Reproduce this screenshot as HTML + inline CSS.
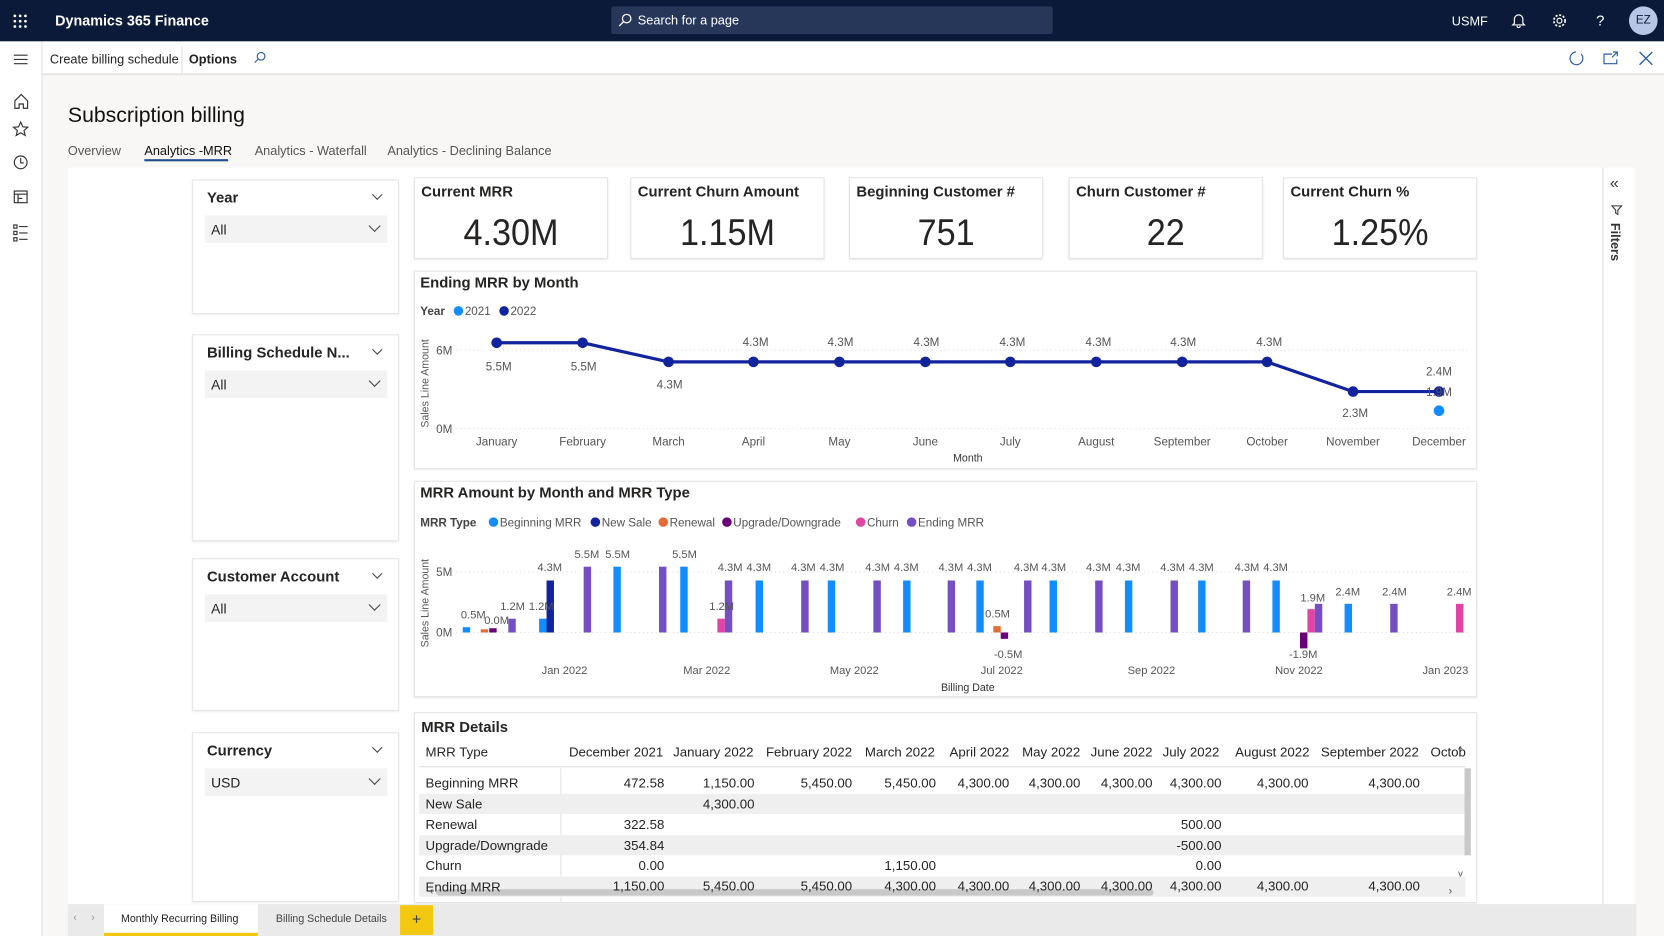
<!DOCTYPE html>
<html><head><meta charset="utf-8"><style>
*{box-sizing:border-box;margin:0;padding:0}
html,body{width:1664px;height:936px;overflow:hidden;background:#f8f7f5;font-family:"Liberation Sans",sans-serif;color:#222}
#s{position:absolute;left:0;top:0;width:1568px;height:882px;transform:scale(1.06122);transform-origin:0 0;background:#f8f7f5}
.a{position:absolute;white-space:nowrap}
.card{position:absolute;background:#fff;border:1px solid #e4e4e4;box-shadow:0 1px 2px rgba(0,0,0,.12)}
.kt{position:absolute;left:6px;top:4px;font-weight:bold;font-size:14px;color:#252423}
.kv{position:absolute;left:0;right:0;top:32px;text-align:center;font-size:35px;color:#252423;transform:scaleX(.92)}
.sl{position:absolute;left:181px;width:195px;background:#fff;border:1px solid #e6e6e6;box-shadow:0 1px 2px rgba(0,0,0,.1)}
.sl .t{position:absolute;left:13px;top:8px;font-weight:bold;font-size:14px;color:#252423}
.sl .dd{position:absolute;left:11px;top:33px;width:172px;height:26px;background:#f3f3f3}
.sl .dd span{position:absolute;left:6px;top:6px;font-size:13px}
.chev{position:absolute;width:8px;height:8px;border-right:1.3px solid #444;border-bottom:1.3px solid #444;transform:rotate(45deg)}
.tbl td{font-size:12.5px;color:#252423}
</style></head><body><div id="s">
<!-- top bar -->
<div class="a" style="left:0;top:0;width:1568px;height:39px;background:#0b1a38"></div>
<svg class="a" style="left:12px;top:13px" width="14" height="14"><g fill="#fff"><circle cx="2" cy="2" r="1.3"/><circle cx="7" cy="2" r="1.3"/><circle cx="12" cy="2" r="1.3"/><circle cx="2" cy="7" r="1.3"/><circle cx="7" cy="7" r="1.3"/><circle cx="12" cy="7" r="1.3"/><circle cx="2" cy="12" r="1.3"/><circle cx="7" cy="12" r="1.3"/><circle cx="12" cy="12" r="1.3"/></g></svg>
<div class="a" style="left:52px;top:12px;color:#fff;font-size:13.5px;font-weight:bold">Dynamics 365 Finance</div>
<div class="a" style="left:576px;top:6px;width:416px;height:26px;background:#26375a;border-radius:2px"></div>
<svg class="a" style="left:582px;top:12px" width="14" height="14"><circle cx="8.5" cy="5.5" r="4" fill="none" stroke="#fff" stroke-width="1.2"/><path d="M5.5 8.5 1.5 12.5" stroke="#fff" stroke-width="1.2"/></svg>
<div class="a" style="left:601px;top:12px;color:#fff;font-size:12px">Search for a page</div>
<div class="a" style="left:1368px;top:13px;color:#fff;font-size:12px">USMF</div>
<svg class="a" style="left:1424px;top:12px" width="14" height="15"><path d="M3 10V6a4 4 0 0 1 8 0v4l1.5 1.5h-11zM5.5 12.5a1.5 1.5 0 0 0 3 0" fill="none" stroke="#fff" stroke-width="1.1"/></svg>
<svg class="a" style="left:1462px;top:12px" width="15" height="15"><circle cx="7.5" cy="7.5" r="2.3" fill="none" stroke="#fff" stroke-width="1.1"/><circle cx="7.5" cy="7.5" r="5.3" fill="none" stroke="#fff" stroke-width="1.6" stroke-dasharray="2 1.5"/></svg>
<div class="a" style="left:1504px;top:11px;color:#fff;font-size:14px">?</div>
<div class="a" style="left:1535px;top:6px;width:27px;height:27px;border-radius:50%;background:#b7c6e6;color:#0b1a38;font-size:11px;text-align:center;line-height:27px">EZ</div>
<!-- left rail -->
<div class="a" style="left:0;top:39px;width:40px;height:843px;background:#fff;border-right:1px solid #e1e1e1"></div>
<svg class="a" style="left:11px;top:48px" width="18" height="190" fill="none" stroke="#333" stroke-width="1.1">
<path d="M2 4h13M2 8h13M2 12h13"/>
<path d="M3 47l6-6 6 6v7h-4v-4H7v4H3z"/>
<path d="M8.5 67l2 4.5 4.7.4-3.6 3.1 1.1 4.6-4.2-2.5-4.2 2.5 1.1-4.6-3.6-3.1 4.7-.4z"/>
<circle cx="8.5" cy="105" r="6"/><path d="M8.5 101v4.5h3"/>
<rect x="2.5" y="132" width="12" height="11"/><path d="M2.5 135h12M6 135v8M6 139h4"/>
<path d="M2 164h3v3H2zM2 170h3v3H2zM2 176h3v3H2zM7 165.5h8M7 171.5h8M7 177.5h8"/>
</svg>
<!-- action bar -->
<div class="a" style="left:40px;top:39px;width:1528px;height:32px;background:#fff;border-bottom:2px solid #e6e6e6"></div>
<div class="a" style="left:47px;top:49px;font-size:12px">Create billing schedule</div>
<div class="a" style="left:171px;top:43px;width:1px;height:26px;background:#ddd"></div>
<div class="a" style="left:178px;top:49px;font-size:12px;font-weight:bold">Options</div>
<svg class="a" style="left:238px;top:48px" width="13" height="13"><circle cx="8" cy="5" r="3.6" fill="none" stroke="#2a5da8" stroke-width="1.1"/><path d="M5.4 7.6 2 11" stroke="#2a5da8" stroke-width="1.1"/></svg>
<svg class="a" style="left:1478px;top:47px" width="16" height="16"><path d="M12 4A6 6 0 1 1 7 2" fill="none" stroke="#2a5da8" stroke-width="1.1"/></svg>
<svg class="a" style="left:1510px;top:48px" width="16" height="14"><path d="M9 3H1.5v9h12V8M10 1h4v4M14 1l-5 5" fill="none" stroke="#2a5da8" stroke-width="1.1"/></svg>
<svg class="a" style="left:1544px;top:48px" width="14" height="14"><path d="M1 1l12 12M13 1 1 13" stroke="#2a5da8" stroke-width="1.3"/></svg>
<!-- title & tabs -->
<div class="a" style="left:64px;top:98px;font-size:20px;color:#111">Subscription billing</div>
<div class="a" style="left:64px;top:135px;font-size:12px;color:#555">Overview</div>
<div class="a" style="left:136px;top:135px;font-size:12px;color:#111">Analytics -MRR</div>
<div class="a" style="left:136px;top:150px;width:79px;height:2px;background:#1f4e8c"></div>
<div class="a" style="left:240px;top:135px;font-size:12px;color:#555">Analytics - Waterfall</div>
<div class="a" style="left:365px;top:135px;font-size:12px;color:#555">Analytics - Declining Balance</div>
<!-- report canvas -->
<div class="a" style="left:64px;top:158px;width:1446px;height:694px;background:#fff"></div>
<div class="a" style="left:1510px;top:158px;width:30px;height:694px;background:#fff;border-left:1px solid #ddd"></div>
<div class="a" style="left:1517px;top:164px;font-size:15px;color:#333">«</div>
<svg class="a" style="left:1518px;top:193px" width="11" height="10"><path d="M1 1h9L6.5 5v4L4.5 8V5z" fill="none" stroke="#333"/></svg>
<div class="a" style="left:1515px;top:210px;font-size:12px;font-weight:bold;color:#333;writing-mode:vertical-rl">Filters</div>
<!-- slicers -->
<div class="sl" style="top:169px;height:127px"><div class="t">Year</div><div class="chev" style="right:16px;top:10px;width:7px;height:7px"></div><div class="dd"><span>All</span><div class="chev" style="right:8px;top:6px"></div></div></div>
<div class="sl" style="top:315px;height:195px"><div class="t">Billing Schedule N...</div><div class="chev" style="right:16px;top:10px;width:7px;height:7px"></div><div class="dd"><span>All</span><div class="chev" style="right:8px;top:6px"></div></div></div>
<div class="sl" style="top:526px;height:144px"><div class="t">Customer Account</div><div class="chev" style="right:16px;top:10px;width:7px;height:7px"></div><div class="dd"><span>All</span><div class="chev" style="right:8px;top:6px"></div></div></div>
<div class="sl" style="top:690px;height:160px"><div class="t">Currency</div><div class="chev" style="right:16px;top:10px;width:7px;height:7px"></div><div class="dd"><span>USD</span><div class="chev" style="right:8px;top:6px"></div></div></div>
<!-- KPIs -->
<div class="card" style="left:390px;top:167px;width:183px;height:77px"><div class="kt">Current MRR</div><div class="kv">4.30M</div></div>
<div class="card" style="left:594px;top:167px;width:183px;height:77px"><div class="kt">Current Churn Amount</div><div class="kv">1.15M</div></div>
<div class="card" style="left:800px;top:167px;width:183px;height:77px"><div class="kt">Beginning Customer #</div><div class="kv">751</div></div>
<div class="card" style="left:1007px;top:167px;width:183px;height:77px"><div class="kt">Churn Customer #</div><div class="kv">22</div></div>
<div class="card" style="left:1209px;top:167px;width:183px;height:77px"><div class="kt">Current Churn %</div><div class="kv">1.25%</div></div>
<!-- line chart -->
<div class="card" style="left:390px;top:255px;width:1002px;height:187px"></div>
<svg class="a" style="left:390px;top:255px" width="1002" height="187" font-family="Liberation Sans" font-size="11" fill="#555">
<text x="6" y="16" font-size="14" font-weight="bold" fill="#252423">Ending MRR by Month</text>
<text x="6" y="42" font-weight="bold" fill="#444">Year</text>
<circle cx="42" cy="38" r="4.5" fill="#118dff"/><text x="48" y="42">2021</text>
<circle cx="85" cy="38" r="4.5" fill="#12239e"/><text x="91" y="42">2022</text>
<text transform="translate(14,148) rotate(-90)" font-size="10">Sales Line Amount</text>
<text x="21" y="79">6M</text><text x="21" y="153">0M</text>
<path d="M40 75H995M40 149H995" stroke="#ddd" stroke-dasharray="1 3"/>
<polyline points="78,68 159,68 240,86 320,86 401,86 482,86 562,86 643,86 724,86 804,86 885,114 966,114" fill="none" stroke="#12239e" stroke-width="3"/>
<g fill="#12239e"><circle cx="78" cy="68" r="5"/><circle cx="159" cy="68" r="5"/><circle cx="240" cy="86" r="5"/><circle cx="320" cy="86" r="5"/><circle cx="401" cy="86" r="5"/><circle cx="482" cy="86" r="5"/><circle cx="562" cy="86" r="5"/><circle cx="643" cy="86" r="5"/><circle cx="724" cy="86" r="5"/><circle cx="804" cy="86" r="5"/><circle cx="885" cy="114" r="5"/><circle cx="966" cy="114" r="5"/></g>
<circle cx="966" cy="132" r="5" fill="#118dff"/>
<g text-anchor="middle"><text x="80" y="94">5.5M</text><text x="160" y="94">5.5M</text><text x="241" y="111">4.3M</text>
<text x="322" y="71">4.3M</text><text x="402" y="71">4.3M</text><text x="483" y="71">4.3M</text><text x="564" y="71">4.3M</text><text x="645" y="71">4.3M</text><text x="725" y="71">4.3M</text><text x="806" y="71">4.3M</text>
<text x="887" y="138">2.3M</text><text x="966" y="99">2.4M</text><text x="966" y="118">1.9M</text>
<text x="78" y="165">January</text><text x="159" y="165">February</text><text x="240" y="165">March</text><text x="320" y="165">April</text><text x="401" y="165">May</text><text x="482" y="165">June</text><text x="562" y="165">July</text><text x="643" y="165">August</text><text x="724" y="165">September</text><text x="804" y="165">October</text><text x="885" y="165">November</text><text x="966" y="165">December</text>
<text x="522" y="180" font-size="10" fill="#333">Month</text></g>
</svg>
<!-- bar chart -->
<div class="card" style="left:390px;top:453px;width:1002px;height:204px"></div>
<svg class="a" style="left:390px;top:453px" width="1002" height="204" font-family="Liberation Sans" font-size="11" fill="#555">
<text x="6" y="16" font-size="14" font-weight="bold" fill="#252423">MRR Amount by Month and MRR Type</text>
<text x="6" y="43" font-weight="bold" fill="#444">MRR Type</text>
<circle cx="75" cy="39" r="4.5" fill="#118dff"/><text x="81" y="43">Beginning MRR</text>
<circle cx="171" cy="39" r="4.5" fill="#12239e"/><text x="177" y="43">New Sale</text>
<circle cx="235" cy="39" r="4.5" fill="#e66c37"/><text x="241" y="43">Renewal</text>
<circle cx="295" cy="39" r="4.5" fill="#6b007b"/><text x="301" y="43">Upgrade/Downgrade</text>
<circle cx="421" cy="39" r="4.5" fill="#e044a7"/><text x="427" y="43">Churn</text>
<circle cx="469" cy="39" r="4.5" fill="#744ec2"/><text x="475" y="43">Ending MRR</text>
<text transform="translate(14,157) rotate(-90)" font-size="10">Sales Line Amount</text>
<text x="21" y="90">5M</text><text x="21" y="147">0M</text>
<path d="M40 86H995M40 143H995" stroke="#ddd" stroke-dasharray="1 3"/>
<g>
<rect x="46" y="138" width="7" height="5" fill="#118dff"/>
<rect x="63" y="140" width="7" height="3" fill="#e66c37"/><rect x="71" y="139" width="7" height="4" fill="#6b007b"/>
<rect x="89" y="130" width="7" height="13" fill="#744ec2"/>
<rect x="118" y="130" width="7" height="13" fill="#118dff"/><rect x="125" y="94" width="7" height="49" fill="#12239e"/>
<rect x="160" y="81" width="7" height="62" fill="#744ec2"/><rect x="188" y="81" width="7" height="62" fill="#118dff"/>
<rect x="231" y="81" width="7" height="62" fill="#744ec2"/><rect x="251" y="81" width="7" height="62" fill="#118dff"/>
<rect x="286" y="130" width="7" height="13" fill="#e044a7"/><rect x="293" y="94" width="7" height="49" fill="#744ec2"/>
<rect x="322" y="94" width="7" height="49" fill="#118dff"/>
<rect x="365" y="94" width="7" height="49" fill="#744ec2"/><rect x="390" y="94" width="7" height="49" fill="#118dff"/>
<rect x="433" y="94" width="7" height="49" fill="#744ec2"/><rect x="461" y="94" width="7" height="49" fill="#118dff"/>
<rect x="503" y="94" width="7" height="49" fill="#744ec2"/><rect x="530" y="94" width="7" height="49" fill="#118dff"/>
<rect x="546" y="137" width="7" height="6" fill="#e66c37"/><rect x="553" y="143" width="7" height="6" fill="#6b007b"/>
<rect x="575" y="94" width="7" height="49" fill="#744ec2"/><rect x="599" y="94" width="7" height="49" fill="#118dff"/>
<rect x="642" y="94" width="7" height="49" fill="#744ec2"/><rect x="670" y="94" width="7" height="49" fill="#118dff"/>
<rect x="713" y="94" width="7" height="49" fill="#744ec2"/><rect x="739" y="94" width="7" height="49" fill="#118dff"/>
<rect x="781" y="94" width="7" height="49" fill="#744ec2"/><rect x="809" y="94" width="7" height="49" fill="#118dff"/>
<rect x="835" y="143" width="7" height="15" fill="#6b007b"/><rect x="842" y="121" width="7" height="22" fill="#e044a7"/><rect x="849" y="116" width="7" height="27" fill="#744ec2"/>
<rect x="877" y="116" width="7" height="27" fill="#118dff"/>
<rect x="920" y="116" width="7" height="27" fill="#744ec2"/>
<rect x="982" y="116" width="7" height="27" fill="#e044a7"/>
</g>
<g text-anchor="middle" font-size="10.5">
<text x="56" y="130">0.5M</text><text x="78" y="135">0.0M</text><text x="93" y="122">1.2M</text><text x="120" y="122">1.2M</text><text x="128" y="85">4.3M</text>
<text x="163" y="73">5.5M</text><text x="192" y="73">5.5M</text><text x="255" y="73">5.5M</text>
<text x="290" y="122">1.2M</text><text x="298" y="85">4.3M</text><text x="325" y="85">4.3M</text>
<text x="367" y="85">4.3M</text><text x="394" y="85">4.3M</text><text x="437" y="85">4.3M</text><text x="464" y="85">4.3M</text>
<text x="506" y="85">4.3M</text><text x="533" y="85">4.3M</text><text x="550" y="129">0.5M</text><text x="560" y="167">-0.5M</text>
<text x="577" y="85">4.3M</text><text x="603" y="85">4.3M</text><text x="645" y="85">4.3M</text><text x="673" y="85">4.3M</text>
<text x="715" y="85">4.3M</text><text x="742" y="85">4.3M</text><text x="785" y="85">4.3M</text><text x="812" y="85">4.3M</text>
<text x="847" y="114">1.9M</text><text x="838" y="167">-1.9M</text><text x="880" y="108">2.4M</text><text x="924" y="108">2.4M</text><text x="985" y="108">2.4M</text>
<text x="142" y="182">Jan 2022</text><text x="276" y="182">Mar 2022</text><text x="415" y="182">May 2022</text><text x="554" y="182">Jul 2022</text><text x="695" y="182">Sep 2022</text><text x="834" y="182">Nov 2022</text><text x="972" y="182">Jan 2023</text>
<text x="522" y="198" font-size="10" fill="#333">Billing Date</text></g>
</svg>
<!-- table -->
<div class="card" style="left:390px;top:671px;width:1002px;height:180px;overflow:hidden">
<div class="a" style="left:6px;top:5px;font-size:14px;font-weight:bold;color:#252423">MRR Details</div>
<div class="a" style="left:4px;top:50px;width:986px;height:1px;background:#ddd"></div>
<div class="a" style="left:137px;top:52px;width:1px;height:130px;background:#e3e3e3"></div>
<div class="a" style="left:4px;top:76px;width:986px;height:19px;background:#efefef"></div>
<div class="a" style="left:4px;top:115px;width:986px;height:19px;background:#efefef"></div>
<div class="a" style="left:4px;top:154px;width:986px;height:19px;background:#efefef"></div>
<div class="a" style="left:989px;top:52px;width:6px;height:82px;background:#c8c8c8"></div>
<div class="a" style="left:20px;top:166px;width:676px;height:6px;background:#c8c8c8;border-radius:3px"></div>
<div class="a" style="left:983px;top:29px;font-size:9px;color:#555">^</div>
<div class="a" style="left:983px;top:146px;font-size:9px;color:#555">v</div>
<div class="a" style="left:14px;top:163px;font-size:10px;color:#555">‹</div>
<div class="a" style="left:974px;top:163px;font-size:10px;color:#555">›</div>
<div class="a" style="left:0;top:28px;font-size:12.5px;color:#252423;line-height:19.5px">
<div class="a" style="left:10px;top:0">MRR Type</div>
<div class="a" style="left:10px;top:29px;line-height:19.5px">Beginning MRR<br>New Sale<br>Renewal<br>Upgrade/Downgrade<br>Churn<br>Ending MRR</div>
</div>
<svg class="a" style="left:0;top:0" width="1002" height="180" font-family="Liberation Sans" font-size="12.5" fill="#252423" text-anchor="end">
<g><text x="234" y="41">December 2021</text><text x="319" y="41">January 2022</text><text x="412" y="41">February 2022</text><text x="490" y="41">March 2022</text><text x="560" y="41">April 2022</text><text x="627" y="41">May 2022</text><text x="695" y="41">June 2022</text><text x="758" y="41">July 2022</text><text x="843" y="41">August 2022</text><text x="946" y="41">September 2022</text><text x="957" y="41" text-anchor="start">Octob</text></g>
<g><text x="235" y="70">472.58</text><text x="320" y="70">1,150.00</text><text x="412" y="70">5,450.00</text><text x="491" y="70">5,450.00</text><text x="560" y="70">4,300.00</text><text x="627" y="70">4,300.00</text><text x="695" y="70">4,300.00</text><text x="760" y="70">4,300.00</text><text x="842" y="70">4,300.00</text><text x="947" y="70">4,300.00</text></g>
<text x="320" y="90">4,300.00</text>
<text x="235" y="109">322.58</text><text x="760" y="109">500.00</text>
<text x="235" y="129">354.84</text><text x="760" y="129">-500.00</text>
<text x="235" y="148">0.00</text><text x="491" y="148">1,150.00</text><text x="760" y="148">0.00</text>
<g><text x="235" y="167">1,150.00</text><text x="320" y="167">5,450.00</text><text x="412" y="167">5,450.00</text><text x="491" y="167">4,300.00</text><text x="560" y="167">4,300.00</text><text x="627" y="167">4,300.00</text><text x="695" y="167">4,300.00</text><text x="760" y="167">4,300.00</text><text x="842" y="167">4,300.00</text><text x="947" y="167">4,300.00</text></g>
</svg>
</div>
<!-- bottom tabs -->
<div class="a" style="left:64px;top:852px;width:1478px;height:30px;background:#eaeaea"></div>
<div class="a" style="left:69px;top:860px;font-size:10px;color:#999">‹</div>
<div class="a" style="left:86px;top:860px;font-size:10px;color:#999">›</div>
<div class="a" style="left:98px;top:852px;width:145px;height:30px;background:#fff;border-bottom:3px solid #f2c811"></div>
<div class="a" style="left:114px;top:861px;font-size:10px;color:#252423">Monthly Recurring Billing</div>
<div class="a" style="left:260px;top:861px;font-size:10px;color:#444">Billing Schedule Details</div>
<div class="a" style="left:377px;top:853px;width:31px;height:28px;background:#f2c811;color:#444;font-size:15px;text-align:center;line-height:28px">+</div>
</div></body></html>
